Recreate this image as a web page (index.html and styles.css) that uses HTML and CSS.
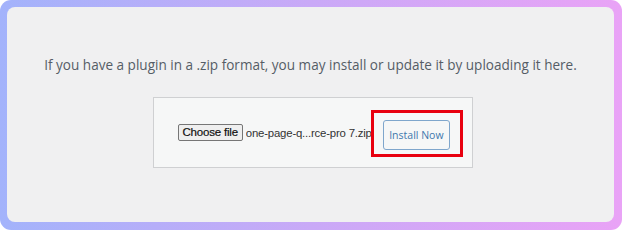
FILE: index.html
```html
<!DOCTYPE html>
<html>
<head>
<meta charset="utf-8">
<link rel="stylesheet" href="styles.css">
</head>
<body>
<div class="frame">
  <div class="panel">
    <p class="intro">If you have a plugin in a .zip format, you may install or update it by uploading it here.</p>
    <div class="upload">
      <span class="choose">Choose file</span>
      <span class="filename">one-page-q...rce-pro 7.zip</span>
      <div class="highlight">
        <span class="install">Install Now</span>
      </div>
    </div>
  </div>
</div>
</body>
</html>
```
FILE: styles.css
```css
html, body {
  margin: 0;
  padding: 0;
  background: #ffffff;
}
.frame {
  width: 622px;
  height: 230px;
  box-sizing: border-box;
  padding: 7px 8px 8px 7px;
  border-radius: 11px;
  background: linear-gradient(90deg, #a3b3fb 0%, #c9a9f7 50%, #e9a3f6 100%);
}
.panel {
  height: 100%;
  background: #f0f0f1;
  border-radius: 8px;
  display: flex;
  flex-direction: column;
  align-items: center;
  padding-top: 48px;
  box-sizing: border-box;
}
.intro {
  margin: 0;
  font-family: "Open Sans", "Noto Sans", sans-serif;
  font-size: 13.55px;
  line-height: 20px;
  color: #555d66;
  white-space: nowrap;
  letter-spacing: 0;
}
.upload {
  margin-top: 22px;
  margin-left: 4px;
  width: 320px;
  height: 71px;
  box-sizing: border-box;
  background: #f6f7f7;
  border: 1px solid #cfd0d2;
  display: flex;
  align-items: center;
  padding: 2px 0 0 24px;
  white-space: nowrap;
}
.choose {
  flex-shrink: 0;
  font-family: "Liberation Sans", Arial, sans-serif;
  font-size: 11.5px;
  line-height: 15px;
  color: #111;
  background: #efefef;
  border: 1px solid #767676;
  border-radius: 2px;
  padding: 0 4px;
  margin-top: -2px;
  letter-spacing: -0.2px;
  -webkit-text-stroke: 0.2px #111;
}
.filename {
  flex-shrink: 0;
  width: 125px;
  overflow: hidden;
  font-family: "Liberation Sans", Arial, sans-serif;
  font-size: 11.4px;
  color: #333;
  margin-left: 3px;
  margin-top: -2px;
  letter-spacing: -0.2px;
}
.highlight {
  flex-shrink: 0;
  margin-left: 0;
  border: 3px solid #e8000f;
  padding: 7px 10px 4px 9px;
  display: flex;
}
.install {
  width: 67px;
  height: 30px;
  box-sizing: border-box;
  border: 1px solid #7fa6cc;
  border-radius: 3px;
  background: #f6f7f7;
  color: #3f77ad;
  font-family: "Open Sans", "Noto Sans", sans-serif;
  font-size: 10.5px;
  display: flex;
  align-items: center;
  justify-content: center;
}
```
